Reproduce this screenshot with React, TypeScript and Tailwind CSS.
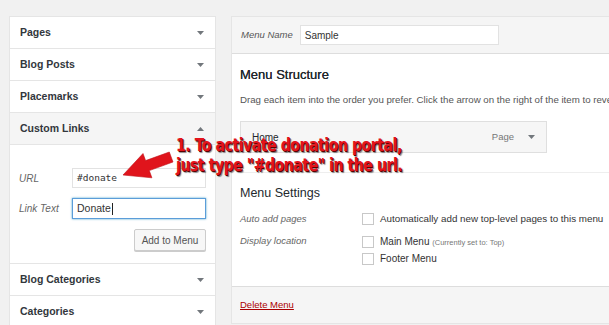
import React from "react";

const sans = { fontFamily: '"Liberation Sans", Arial, sans-serif' };

function Caret({ up = false }: { up?: boolean }) {
  return (
    <svg width="7" height="4" viewBox="0 0 7 4" className="shrink-0">
      {up ? <path d="M0 4 L3.5 0 L7 4 Z" fill="#72777c" /> : <path d="M0 0 L7 0 L3.5 4 Z" fill="#72777c" />}
    </svg>
  );
}

function Row({ label, up = false, gray = false }: { label: string; up?: boolean; gray?: boolean }) {
  return (
    <div
      className={`flex h-[32px] items-center justify-between border-b border-[#e5e5e5] pl-[10px] pr-[11px] ${gray ? "bg-[#f5f5f5]" : "bg-white"}`}
    >
      <span className="text-[10.5px] font-bold text-[#32373c]">{label}</span>
      <Caret up={up} />
    </div>
  );
}

function Check() {
  return <span className="inline-block h-[12px] w-[12px] shrink-0 border border-[#c8c8c8] bg-white" />;
}

export default function App() {
  return (
    <div className="relative h-[325px] w-[609px] overflow-hidden bg-[#f1f1f1]" style={sans}>
      <div className="flex items-start gap-[15px] pl-[9px] pt-[16px]">
        {/* left accordion */}
        <div className="w-[207px] shrink-0 border border-b-0 border-[#e5e5e5] bg-white">
          <Row label="Pages" />
          <Row label="Blog Posts" />
          <Row label="Placemarks" />
          <Row label="Custom Links" up gray />
          <div className="border-b border-[#e5e5e5] bg-white pb-[12px] pl-[9px] pr-[9px] pt-[23px]">
            <div className="flex items-center">
              <span className="w-[53px] shrink-0 text-[10px] italic text-[#666]">URL</span>
              <div className="flex h-[20px] w-[134px] items-center border border-[#e2e2e2] bg-white pl-[4px] font-['DejaVu_Sans_Mono',monospace] text-[9.5px] text-[#333]">
                #donate
              </div>
            </div>
            <div className="mt-[10px] flex items-center">
              <span className="w-[53px] shrink-0 text-[10px] italic text-[#666]">Link Text</span>
              <div className="flex h-[21px] w-[134px] items-center border border-[#5b9dd9] bg-white pl-[4px] text-[10.5px] text-[#333] shadow-[0_0_2px_rgba(30,140,190,0.8)]">
                Donate<span className="ml-[1px] inline-block h-[12px] w-px bg-[#222]" />
              </div>
            </div>
            <div className="mt-[10px] flex justify-end">
              <div className="flex h-[22px] w-[72px] items-center justify-center rounded-[2px] border border-[#ccc] bg-[#f7f7f7] text-[10px] text-[#555] shadow-[0_1px_0_#ccc]">
                Add to Menu
              </div>
            </div>
          </div>
          <Row label="Blog Categories" />
          <Row label="Categories" />
        </div>

        {/* right menu editor */}
        <div className="w-[400px] shrink-0 border border-[#e5e5e5] bg-white">
          <div className="flex h-[37px] items-center border-b border-[#dddddd] bg-[#f5f5f5] pl-[9px]">
            <span className="text-[9.5px] italic text-[#555]">Menu Name</span>
            <div className="ml-[7px] flex h-[20px] w-[199px] items-center border border-[#e2e2e2] bg-white pl-[4px] text-[10px] text-[#333]">
              Sample
            </div>
          </div>
          <div className="px-[8px]">
            <div className="pt-[11px] text-[13px] text-[#23282d] [text-shadow:0_0_0.3px_#23282d]">Menu Structure</div>
            <div className="mt-[8px] whitespace-nowrap text-[9.7px] text-[#555]">
              Drag each item into the order you prefer. Click the arrow on the right of the item to reveal additional configuration options.
            </div>
            <div className="mt-[14px] flex h-[32px] w-[307px] items-center justify-between border border-[#dfdfdf] bg-[#f6f6f6] pl-[11px] pr-[11px]">
              <span className="text-[10px] text-[#23282d]">Home</span>
              <span className="flex items-center gap-[14px] text-[9.5px] text-[#777]">
                Page <Caret />
              </span>
            </div>
            <div className="mt-[19px] border-t border-[#eeeeee] pt-[11px] text-[12.5px] text-[#23282d]">Menu Settings</div>
            <div className="mt-[9px] flex items-center">
              <span className="w-[122px] shrink-0 text-[9.5px] italic text-[#666]">Auto add pages</span>
              <Check />
              <span className="ml-[6px] whitespace-nowrap text-[9.8px] text-[#333]">
                Automatically add new top-level pages to this menu
              </span>
            </div>
            <div className="mt-[8px] flex items-start">
              <span className="w-[122px] shrink-0 text-[9.5px] italic text-[#666]">Display location</span>
              <div className="flex flex-col gap-[2px]">
                <div className="flex items-center">
                  <Check />
                  <span className="ml-[6px] whitespace-nowrap text-[10px] text-[#333]">
                    Main Menu <span className="text-[7.5px] text-[#777]">(Currently set to: Top)</span>
                  </span>
                </div>
                <div className="flex items-center">
                  <Check />
                  <span className="ml-[6px] text-[10px] text-[#333]">Footer Menu</span>
                </div>
              </div>
            </div>
          </div>
          <div className="mt-[20px] flex h-[37px] items-center border-t border-[#dddddd] bg-[#f5f5f5] pl-[8px]">
            <span className="text-[9.5px] text-[#a00] underline">Delete Menu</span>
          </div>
        </div>
      </div>

      {/* annotation arrow */}
      <svg className="pointer-events-none absolute left-0 top-0" width="609" height="325" viewBox="0 0 609 325">
        <path
          d="M123 175 L143 153.5 L145.6 160.6 L169.3 152 L173 162 L149.3 170.6 L151.9 177.8 Z"
          fill="#e0141c"
          stroke="#c01018"
          strokeWidth="0.6"
        />
      </svg>

      {/* annotation text */}
      <div
        className="absolute left-[176px] top-[135px] origin-left scale-x-[0.91] whitespace-nowrap text-[17px] font-bold leading-[20px] tracking-[-0.4px] text-[#e3141c]"
        style={{
          fontFamily: '"DejaVu Sans Condensed", "Liberation Sans Narrow", "DejaVu Sans", sans-serif',
          fontStretch: "condensed",
          textShadow: "1px 1px 0 #5a0000, 2px 2px 1px rgba(0,0,0,0.45)",
        }}
      >
        <div>1. To activate donation portal,</div>
        <div>just type "#donate" in the url.</div>
      </div>
    </div>
  );
}
